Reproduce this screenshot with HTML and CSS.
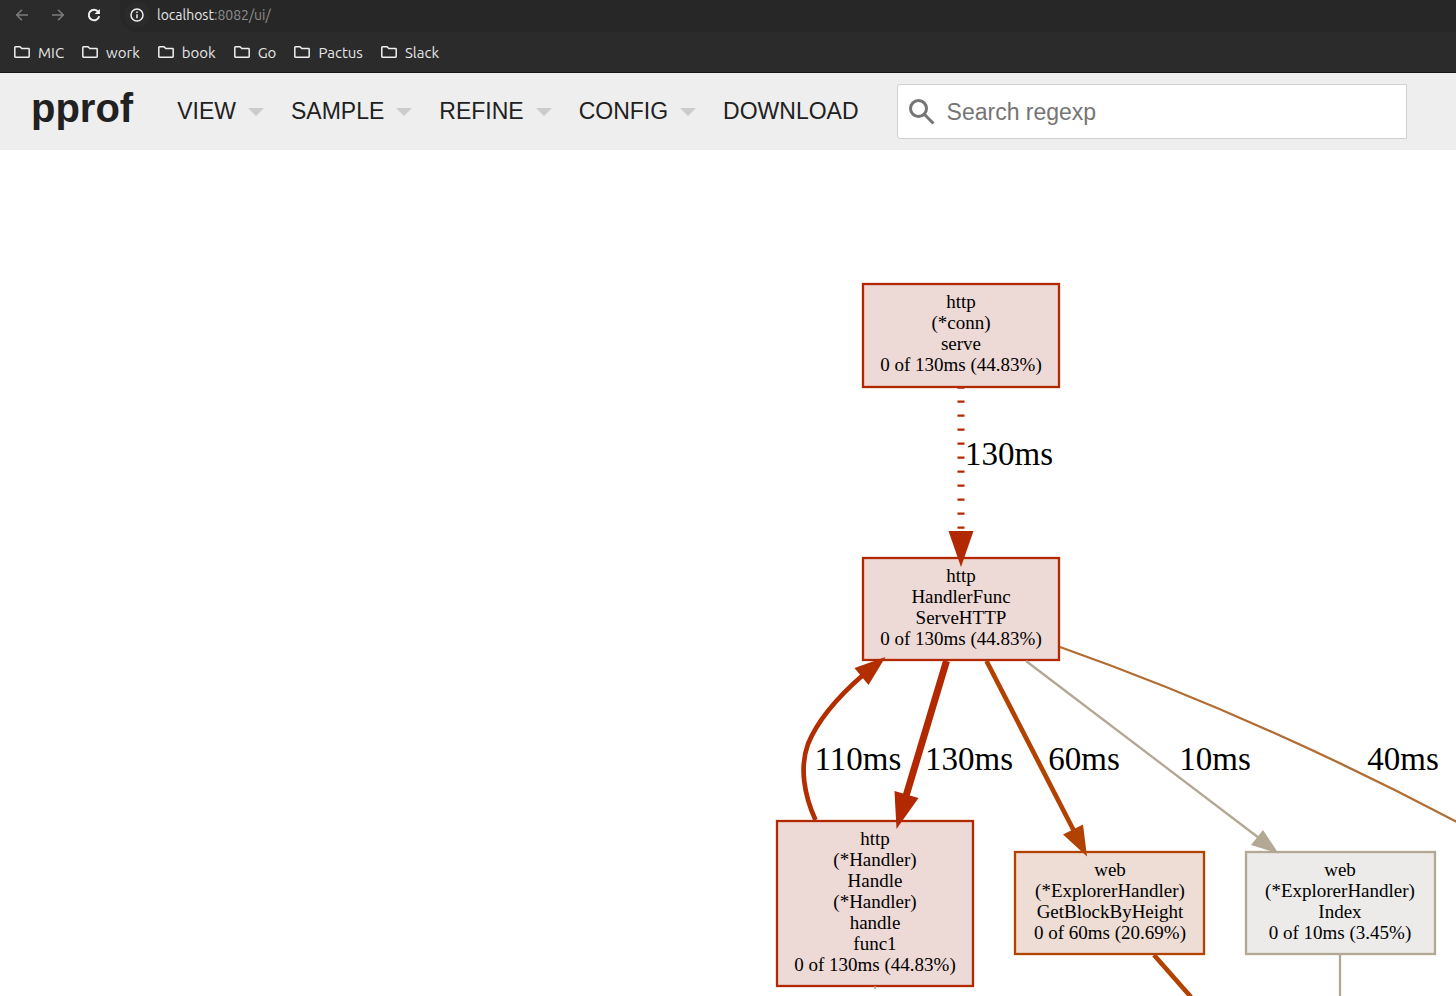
FILE: index.html
```html
<!DOCTYPE html>
<html lang="en">
<head>
<meta charset="utf-8">
<title>pprof</title>
<link rel="stylesheet" href="styles.css">
</head>
<body>
<div class="browser">
  <div class="toolbar">
    <button class="tool dim" aria-label="Back"><svg width="16" height="16" viewBox="0 0 16 16"><path d="M14 8H3M8 2.700L2.700 8L8 13.300"/></svg></button>
    <button class="tool dim" aria-label="Forward"><svg width="16" height="16" viewBox="0 0 16 16"><path d="M2 8h11M8 2.700L13.300 8L8 13.300"/></svg></button>
    <button class="tool" aria-label="Reload"><svg class="reload" width="16" height="16" viewBox="0 0 16 16"><path d="M13.200 9.300A5.300 5.300 0 1 1 12.300 4.800"/><path class="solid" d="M13.900 2v5h-5.300z"/></svg></button>
    <div class="address">
      <button class="info" aria-label="Site information"><svg width="14" height="14" viewBox="0 0 14 14"><circle cx="7" cy="7" r="6"/><path d="M7 6.200v4M7 3.600v1.500"/></svg></button>
      <span class="url">localhost<span class="path">:8082/ui/</span></span>
    </div>
  </div>
  <nav class="bookmarks">
    <a href="#"><svg width="16" height="12" viewBox="0 0 16 12"><path d="M.800 10V1.500q0-.700.700-.700H6L7.800 2.600h6.700q.700 0 .700.700V10.500q0 .700-.700.700h-13q-.700 0-.700-.700z"/></svg>MIC</a>
    <a href="#"><svg width="16" height="12" viewBox="0 0 16 12"><path d="M.800 10V1.500q0-.700.700-.700H6L7.800 2.600h6.700q.700 0 .700.700V10.500q0 .700-.700.700h-13q-.700 0-.700-.700z"/></svg>work</a>
    <a href="#"><svg width="16" height="12" viewBox="0 0 16 12"><path d="M.800 10V1.500q0-.700.700-.700H6L7.800 2.600h6.700q.700 0 .700.700V10.500q0 .700-.700.700h-13q-.700 0-.700-.700z"/></svg>book</a>
    <a href="#"><svg width="16" height="12" viewBox="0 0 16 12"><path d="M.800 10V1.500q0-.700.700-.700H6L7.800 2.600h6.700q.700 0 .700.700V10.500q0 .700-.700.700h-13q-.700 0-.700-.700z"/></svg>Go</a>
    <a href="#"><svg width="16" height="12" viewBox="0 0 16 12"><path d="M.800 10V1.500q0-.700.700-.700H6L7.800 2.600h6.700q.700 0 .700.700V10.500q0 .700-.700.700h-13q-.700 0-.700-.700z"/></svg>Pactus</a>
    <a href="#"><svg width="16" height="12" viewBox="0 0 16 12"><path d="M.800 10V1.500q0-.700.700-.700H6L7.800 2.600h6.700q.700 0 .700.700V10.500q0 .700-.700.700h-13q-.700 0-.700-.700z"/></svg>Slack</a>
  </nav>
</div>

<header class="header">
  <h1 class="title"><a href="./">pprof</a></h1>
  <nav class="menu">
    <button class="item">VIEW<span class="caret"></span></button>
    <button class="item">SAMPLE<span class="caret"></span></button>
    <button class="item">REFINE<span class="caret"></span></button>
    <button class="item">CONFIG<span class="caret"></span></button>
    <a class="item" href="./download">DOWNLOAD</a>
  </nav>
  <label class="search">
    <svg width="26" height="26" viewBox="0 0 26 26" aria-hidden="true"><circle cx="9.500" cy="9.500" r="8"/><path d="M15.300 15.300L24.500 24.500"/></svg>
    <input type="text" placeholder="Search regexp" aria-label="Search regexp">
  </label>
</header>

<main class="graph">
  <svg class="canvas" role="img" aria-label="Call graph">
    <g class="node hot">
      <rect x="863" y="134" width="196" height="103"/>
      <text x="961" y="158">http</text>
      <text x="961" y="179">(*conn)</text>
      <text x="961" y="200">serve</text>
      <text x="961" y="221">0 of 130ms (44.83%)</text>
    </g>
    <g class="node hot">
      <rect x="863" y="408" width="196" height="102"/>
      <text x="961" y="432">http</text>
      <text x="961" y="453">HandlerFunc</text>
      <text x="961" y="474">ServeHTTP</text>
      <text x="961" y="495">0 of 130ms (44.83%)</text>
    </g>
    <g class="node hot">
      <rect x="777" y="671" width="196" height="165"/>
      <text x="875" y="695">http</text>
      <text x="875" y="716">(*Handler)</text>
      <text x="875" y="737">Handle</text>
      <text x="875" y="758">(*Handler)</text>
      <text x="875" y="779">handle</text>
      <text x="875" y="800">func1</text>
      <text x="875" y="821">0 of 130ms (44.83%)</text>
    </g>
    <g class="node warm">
      <rect x="1015" y="702" width="189" height="102"/>
      <text x="1110" y="726">web</text>
      <text x="1110" y="747">(*ExplorerHandler)</text>
      <text x="1110" y="768">GetBlockByHeight</text>
      <text x="1110" y="789">0 of 60ms (20.69%)</text>
    </g>
    <g class="node cool">
      <rect x="1246" y="702" width="189" height="102"/>
      <text x="1340" y="726">web</text>
      <text x="1340" y="747">(*ExplorerHandler)</text>
      <text x="1340" y="768">Index</text>
      <text x="1340" y="789">0 of 10ms (3.45%)</text>
    </g>

    <g class="edge hot">
      <path class="dotted" d="M961 237V382"/>
      <path class="head" d="M948.500 381H973.500L961 417z"/>
    </g>
    <g class="edge hot-mid">
      <path d="M815.500 670C804 645 799.500 617 808 594C819 567 840 545 863 525"/>
      <path class="head" d="M854.500 518L885.500 507L868.500 535z"/>
    </g>
    <g class="edge hot">
      <path class="wide" d="M946.500 511L906 646"/>
      <path class="head" d="M894.500 641L918.500 648L896.500 679z"/>
    </g>
    <g class="edge warm">
      <path class="mid" d="M986.500 511L1074 681"/>
      <path class="head" d="M1063 684.500L1083 674.500L1087 706.500z"/>
      <path class="mid" d="M1154 805L1191 847"/>
    </g>
    <g class="edge cool">
      <path d="M1026 511L1259 688"/>
      <path class="head" d="M1251 695L1263 680L1278.500 703.500z"/>
      <path d="M1340 805V847"/>
      <path d="M874 837.500H876"/>
    </g>
    <g class="edge tan">
      <path d="M1060 497C1190 543 1330 605 1458 672.500"/>
    </g>

    <g class="labels">
      <text x="1009" y="315">130ms</text>
      <text x="858" y="620">110ms</text>
      <text x="969" y="620">130ms</text>
      <text x="1084" y="620">60ms</text>
      <text x="1215" y="620">10ms</text>
      <text x="1403" y="620">40ms</text>
    </g>
  </svg>
</main>
</body>
</html>
```
FILE: styles.css
```css
* { box-sizing: border-box; }

body {
  margin: 0;
  height: 100vh;
  display: flex;
  flex-direction: column;
  overflow: hidden;
  background: #fff;
  color: #212121;
  font-family: "Liberation Sans", Arial, sans-serif;
}

button {
  border: 0;
  padding: 0;
  background: none;
  color: inherit;
  font: inherit;
}

a { color: inherit; text-decoration: none; }

.browser {
  flex: none;
  background: #2b2b2b;
  border-bottom: 1px solid #161616;
  color: #e6e6e6;
  font-family: Ubuntu, "Noto Sans", sans-serif;
  font-size: 14px;
}

.browser svg {
  display: block;
  fill: none;
  stroke: #f0f0f0;
  stroke-width: 1.5;
}

.toolbar {
  display: flex;
  height: 32px;
  padding-left: 14px;
  gap: 20px;
}

.tool { width: 16px; height: 30px; }
.browser .dim svg { stroke: #7c7c7c; }
.browser .reload { stroke-width: 2; }
.browser .solid { fill: #f0f0f0; stroke: none; }

.address {
  flex: 1;
  display: flex;
  align-items: center;
  gap: 7px;
  margin-left: -2px;
  padding: 0 0 2px 4px;
  background: #272727;
  border-radius: 0 0 0 18px;
}

.info {
  display: grid;
  place-items: center;
  width: 26px;
  height: 26px;
  border-radius: 50%;
  background: #2b2b2b;
}

.path { color: #8f8f8f; }

.bookmarks {
  display: flex;
  align-items: center;
  gap: 18px;
  height: 40px;
  padding-left: 14px;
  font-size: 15px;
}

.bookmarks a {
  display: flex;
  align-items: center;
  gap: 8px;
}

.header {
  flex: none;
  display: flex;
  align-items: center;
  height: 77px;
  padding: 0 49px 0 31px;
  background: #eee;
  font-size: 23px;
}

.title {
  margin: 0 44px 8px 0;
  font-size: 40px;
  line-height: 46px;
}

.menu {
  display: flex;
  align-items: center;
  gap: 27px;
  margin-right: 38px;
}

.item {
  display: flex;
  align-items: center;
  gap: 12px;
}

.caret {
  border: 8px solid transparent;
  border-top-color: #ccc;
  border-bottom: 0;
}

.search {
  flex: 1;
  display: flex;
  align-items: center;
  gap: 12px;
  height: 55px;
  padding-left: 11px;
  background: #fff;
  border: 1px solid #d0d0d0;
  border-radius: 3px 0 0 3px;
}

.search svg {
  flex: none;
  fill: none;
  stroke: #757575;
  stroke-width: 3;
}

.search input {
  flex: 1;
  min-width: 0;
  border: 0;
  padding: 2px 0 0;
  outline: 0;
  background: none;
  font: inherit;
}

.search input::placeholder { color: #757575; }

.graph { flex: 1; min-height: 0; }

.canvas {
  display: block;
  width: 100%;
  height: 100%;
  font-family: "Liberation Serif", "Times New Roman", serif;
  text-anchor: middle;
}

.node { font-size: 19px; }
.node rect { stroke-width: 2.300; }
.node text, .labels text { fill: #000; }
.node.hot rect { fill: #edd9d5; stroke: #b22800; }
.node.warm rect { fill: #edddd5; stroke: #b24200; }
.node.cool rect { fill: #ecebe9; stroke: #b2a893; }

.edge { fill: none; stroke-width: 2.300; }
.edge.hot { stroke: #b22800; }
.edge.hot-mid { stroke: #b22e00; stroke-width: 4.700; }
.edge.warm { stroke: #b24200; }
.edge.cool { stroke: #b2a893; }
.edge.tan { stroke: #b26d33; }
.edge .dotted { stroke-width: 7; stroke-dasharray: 2.300 11.700; stroke-dashoffset: 0.500; }
.edge .mid { stroke-width: 4.700; }
.edge .wide { stroke-width: 7; }
.edge .head { stroke: none; }
.hot .head { fill: #b22800; }
.hot-mid .head { fill: #b22e00; }
.warm .head { fill: #b24200; }
.cool .head { fill: #b2a893; }

.labels { font-size: 33px; }
```
